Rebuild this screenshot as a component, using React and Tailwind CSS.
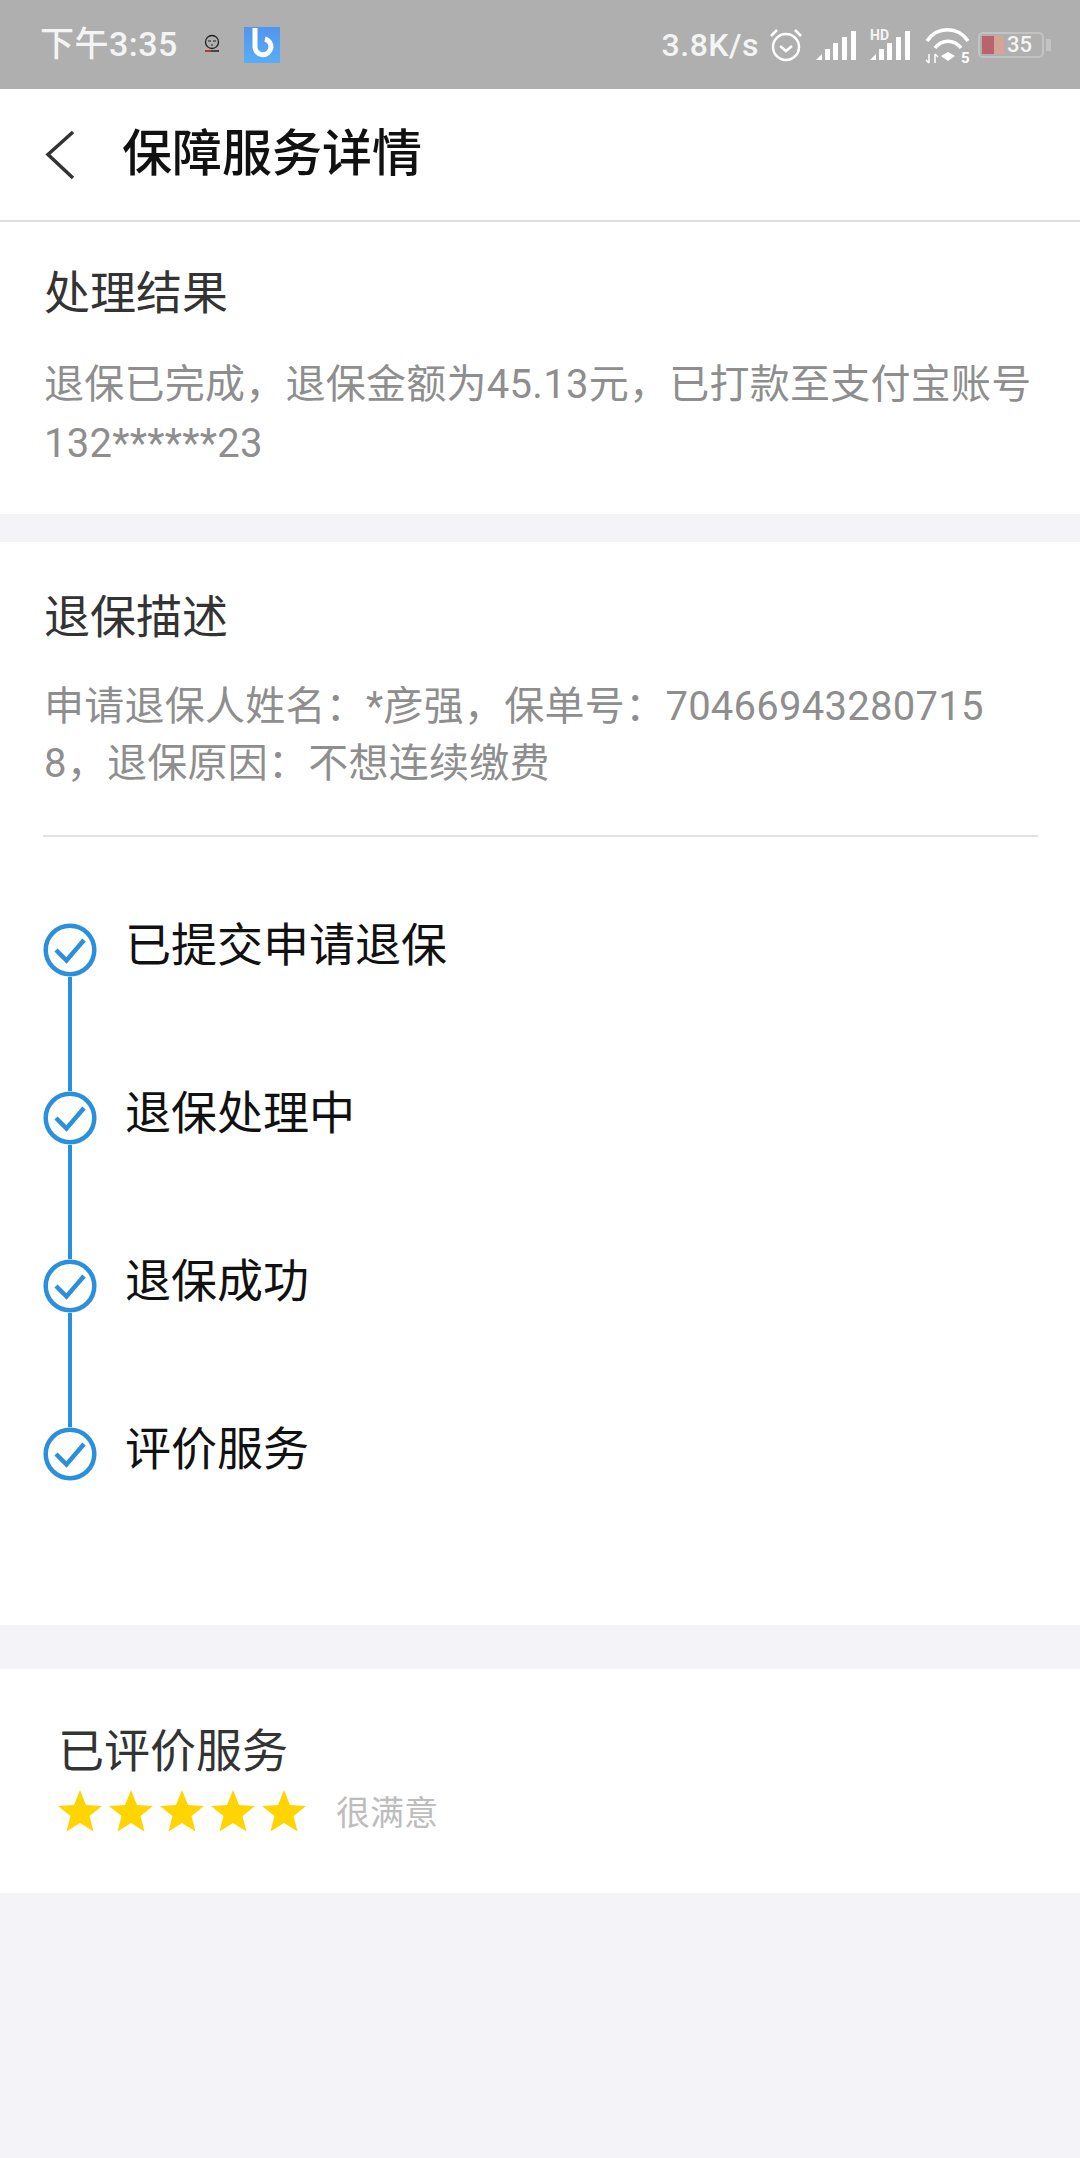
const cjk = "font-['Roboto','Noto_Sans_CJK_SC',sans-serif]"

const steps = ['已提交申请退保', '退保处理中', '退保成功', '评价服务']

const CheckCircle = () => (
    <svg width="54" height="54" viewBox="0 0 54 54" fill="none" className="shrink-0">
        <circle cx="27" cy="27" r="24.3" stroke="#2b90dc" strokeWidth="4.500" />
        <path d="M13 27 L23.5 37.500 L41 17" stroke="#2b90dc" strokeWidth="4.500" />
    </svg>
)

const Star = () => (
    <svg width="44" height="42" viewBox="0 0 44 42">
        <path d="M22 0 L28 15 L44 16 L31.5 26 L35.5 41.5 L22 33 L8.500 41.500 L12.500 26 L0 16 L16 15 Z" fill="#ffd400" />
    </svg>
)

const Bars = () => (
    <svg width="41" height="29" viewBox="0 0 41 29" fill="#fff">
        <path d="M0 29 L6 23 V29 Z" />
        <rect x="9" y="18" width="5" height="11" />
        <rect x="17" y="12" width="5" height="17" />
        <rect x="26" y="6" width="5" height="23" />
        <rect x="35" y="0" width="5" height="29" />
    </svg>
)

const StatusBar = () => (
    <div className="h-[89px] bg-[#afafaf] flex items-center justify-between pl-10 pr-[29px] text-[#f4f4f4] shrink-0">
        <div className="flex items-center">
            <span className="text-[34px] font-medium leading-tight tracking-[0.5px] whitespace-nowrap">下午3:35</span>
            <svg width="18" height="22" viewBox="0 0 18 22" fill="none" className="ml-[26px]">
                <circle cx="8" cy="8" r="6.500" stroke="#222" strokeWidth="1.300" />
                <path d="M4 7h3M9 7h3M7 11h2" stroke="#222" />
                <path d="M1 17h6" stroke="#b33" strokeWidth="2" />
                <path d="M7 17h8" stroke="#222" strokeWidth="1.500" />
            </svg>
            <svg width="36" height="36" viewBox="0 0 36 36" fill="none" className="ml-[22px]">
                <defs>
                    <linearGradient id="bixby" x1="0" y1="0" x2="0" y2="1">
                        <stop offset="0" stopColor="#5295ee" />
                        <stop offset="1" stopColor="#57aef5" />
                    </linearGradient>
                </defs>
                <rect width="36" height="36" fill="url(#bixby)" />
                <path d="M11 1 V19 A8 8 0 1 0 21 12" stroke="#fff" strokeWidth="5" />
            </svg>
        </div>
        <div className="flex items-center">
            <span className="text-[32px] font-medium leading-tight tracking-[0.5px] whitespace-nowrap">3.8K/s</span>
            <svg width="34" height="34" viewBox="0 0 34 34" fill="none" stroke="#fff" strokeWidth="2.500" className="ml-[10px]">
                <circle cx="17" cy="19" r="13" />
                <path d="M11 18l6 5 6-5M2 8l6-6M32 8l-6-6" />
            </svg>
            <div className="ml-[13px] mt-[1px]"><Bars /></div>
            <div className="ml-[13px] mt-[1px] relative">
                <Bars />
                <span className="absolute left-0 -top-[3px] h-[15px] text-[14px] font-bold leading-[15px] bg-[#afafaf]">HD</span>
            </div>
            <svg width="46" height="38" viewBox="0 0 46 38" fill="none" stroke="#fff" className="ml-[14px] mt-[3px]">
                <path d="M2 14 C12 -1 33 -1 43 14M10 21 C17 12 29 12 36 21" strokeWidth="3.500" />
                <path d="M16 29 L23 25 L30 29 L23 34 Z" fill="#fff" stroke="none" />
                <path d="M4 27v9M1 33l3 3M10 27v9M10 27l3 3" strokeWidth="1.500" />
                <text x="36" y="36" fontSize="15" fontWeight="700" fill="#fff" stroke="none">5</text>
            </svg>
            <div className="relative ml-[7px] w-[66px] h-[26px] rounded-[5px] border-2 border-[#c3c3c3] flex items-center p-[2px]">
                <div className="w-[12px] h-full bg-[#b9636f]" />
                <div className="w-[10px] h-full bg-[#d4a596]" />
                <span className="ml-[3px] text-[22px] font-medium leading-none">35</span>
            </div>
            <div className="ml-[2px] w-[5px] h-[12px] bg-[#c3c3c3]" />
        </div>
    </div>
)

export default function App() {
    return (
        <div className={`w-[1080px] h-[2158px] bg-[#f3f3f8] flex flex-col ${cjk}`}>
            <StatusBar />

            {/* header */}
            <div className="h-[133px] bg-white border-b-2 border-[#dcdcdc] flex items-center pl-[44px] shrink-0">
                <svg width="32" height="50" viewBox="0 0 32 50" fill="none" stroke="#333" strokeWidth="3.500">
                    <path d="M29 2 L4 24.500 L29 48" />
                </svg>
                <h1 className="ml-[46px] text-[50px] font-medium text-[#111] leading-none -mt-[2px]">保障服务详情</h1>
            </div>

            {/* result */}
            <div className="h-[292px] bg-white px-[44px] pt-[39px] shrink-0">
                <div className="text-[46px] leading-[64px] text-[#333]">处理结果</div>
                <p className="mt-[30px] text-[40px] leading-[59px] tracking-[0.26px] text-[#8e8e8e]">
                    退保已完成，退保金额为45.13元，已打款至支付宝账号
                    <br />
                    132******23
                </p>
            </div>

            {/* description + steps */}
            <div className="mt-[28px] h-[1083px] bg-white pl-[43px] pr-[44px] pt-[43px] shrink-0">
                <div className="pl-px text-[46px] leading-[64px] text-[#333]">退保描述</div>
                <p className="pl-px mt-[29px] text-[40px] leading-[57px] tracking-[0.26px] text-[#8e8e8e]">
                    申请退保人姓名：*彦强，保单号：70466943280715
                    <br />
                    8，退保原因：不想连续缴费
                </p>
                <div className="mt-[43px] h-[2px] bg-[#e2e2e2] w-[995px]" />
                <div className="mt-[86px] flex flex-col">
                    {steps.map((step, i) => (
                        <div key={step} className="relative flex items-center h-[54px] mb-[114px]">
                            <CheckCircle />
                            {i < steps.length - 1 && (
                                <div className="absolute left-[25px] top-[54px] w-[4px] h-[114px] bg-[#2b90dc]" />
                            )}
                            <span className="ml-[28px] -mt-[11px] text-[46px] leading-none text-[#111]">{step}</span>
                        </div>
                    ))}
                </div>
            </div>

            {/* rating */}
            <div className="mt-[44px] h-[224px] bg-white pl-[58px] pt-[54px] shrink-0">
                <div className="text-[46px] leading-[56px] text-[#333]">已评价服务</div>
                <div className="mt-[11px] flex items-center">
                    <div className="flex gap-[7px]">
                        <Star /><Star /><Star /><Star /><Star />
                    </div>
                    <span className="ml-[30px] mt-[3px] text-[34px] leading-none text-[#bdbdbd]">很满意</span>
                </div>
            </div>
        </div>
    )
}
